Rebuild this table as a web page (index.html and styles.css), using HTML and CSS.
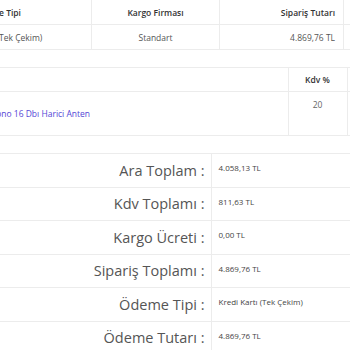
FILE: index.html
```html
<!DOCTYPE html>
<html>
<head>
<meta charset="utf-8">
<link rel="stylesheet" href="styles.css">
</head>
<body>
<div class="page">
  <table class="grid order">
    <tr class="head">
      <th class="c1">Ödeme Tipi</th>
      <th class="c2">Kargo Firması</th>
      <th class="c3">Sipariş Tutarı</th>
      <th class="c4"></th>
    </tr>
    <tr>
      <td class="c1">Kredi Kartı (Tek Çekim)</td>
      <td class="c2">Standart</td>
      <td class="c3">4.869,76 TL</td>
      <td class="c4"></td>
    </tr>
  </table>

  <table class="grid items">
    <tr class="head">
      <th class="p1"></th>
      <th class="p2">Kdv %</th>
      <th class="p3"></th>
    </tr>
    <tr class="item">
      <td class="p1"><a class="plink">Ubiquiti Mono 16 Dbı Harici Anten</a></td>
      <td class="p2">20</td>
      <td class="p3"></td>
    </tr>
  </table>

  <table class="totals">
    <tr><th>Ara Toplam :</th><td>4.058,13 TL</td></tr>
    <tr><th>Kdv Toplamı :</th><td>811,63 TL</td></tr>
    <tr><th>Kargo Ücreti :</th><td>0,00 TL</td></tr>
    <tr><th>Sipariş Toplamı :</th><td>4.869,76 TL</td></tr>
    <tr><th>Ödeme Tipi :</th><td>Kredi Kartı (Tek Çekim)</td></tr>
    <tr><th>Ödeme Tutarı :</th><td>4.869,76 TL</td></tr>
  </table>
</div>
</body>
</html>
```

FILE: styles.css
```css
html, body {
  margin: 0;
  padding: 0;
  background: #fff;
  overflow: hidden;
}
body {
  font-family: "Open Sans", "Noto Sans", sans-serif;
  color: #555;
  width: 350px;
  height: 350px;
}
.page {
  width: 350px;
  height: 350px;
  overflow: hidden;
}
table {
  border-collapse: collapse;
}
th, td {
  box-sizing: border-box;
}
.grid th, .grid td {
  border: 1px solid #ececec;
  padding: 0 8px;
  font-size: 8.5px;
  white-space: nowrap;
  overflow: hidden;
}
.grid th {
  font-weight: 600;
  color: #333;
}
.order {
  margin-left: -97px;
  margin-top: -1px;
  table-layout: fixed;
  width: 600px;
}
.order .head th { height: 25px; }
.order td { height: 25px; color: #555; }
.order .c1 { width: 188px; text-align: center; }
.order .c2 { width: 128px; text-align: center; }
.order .c3 { width: 124px; text-align: right; }
.order .c4 { width: 160px; }

.items {
  margin-top: 17px;
  margin-left: -53px;
  table-layout: fixed;
  width: 500px;
}
.items .head th { height: 24px; }
.items .p1 { width: 341px; border-left: none; text-align: left; }
.items .p2 { width: 59px; text-align: center; }
.items .p3 { width: 100px; }
.items .item td { height: 44px; }
.items .item .p1 { vertical-align: middle; }
.items .item .p2 { vertical-align: top; padding-top: 7px; color: #666; }
.plink {
  color: #5446d6;
  text-decoration: none;
}

.totals {
  margin-top: 17px;
  width: 350px;
  table-layout: fixed;
}
.totals th, .totals td {
  border-top: 1px solid #ececec;
  border-bottom: 1px solid #ececec;
  height: 33.5px;
  padding: 0;
}
.totals th {
  width: 211px;
  text-align: right;
  padding-right: 6px;
  font-weight: 400;
  font-size: 14.5px;
  color: #555;
  border-right: 1px solid #ececec;
  vertical-align: middle;
}
.totals td {
  vertical-align: top;
  padding: 8px 0 0 7px;
  font-size: 8px;
  color: #444;
  white-space: nowrap;
}
```
